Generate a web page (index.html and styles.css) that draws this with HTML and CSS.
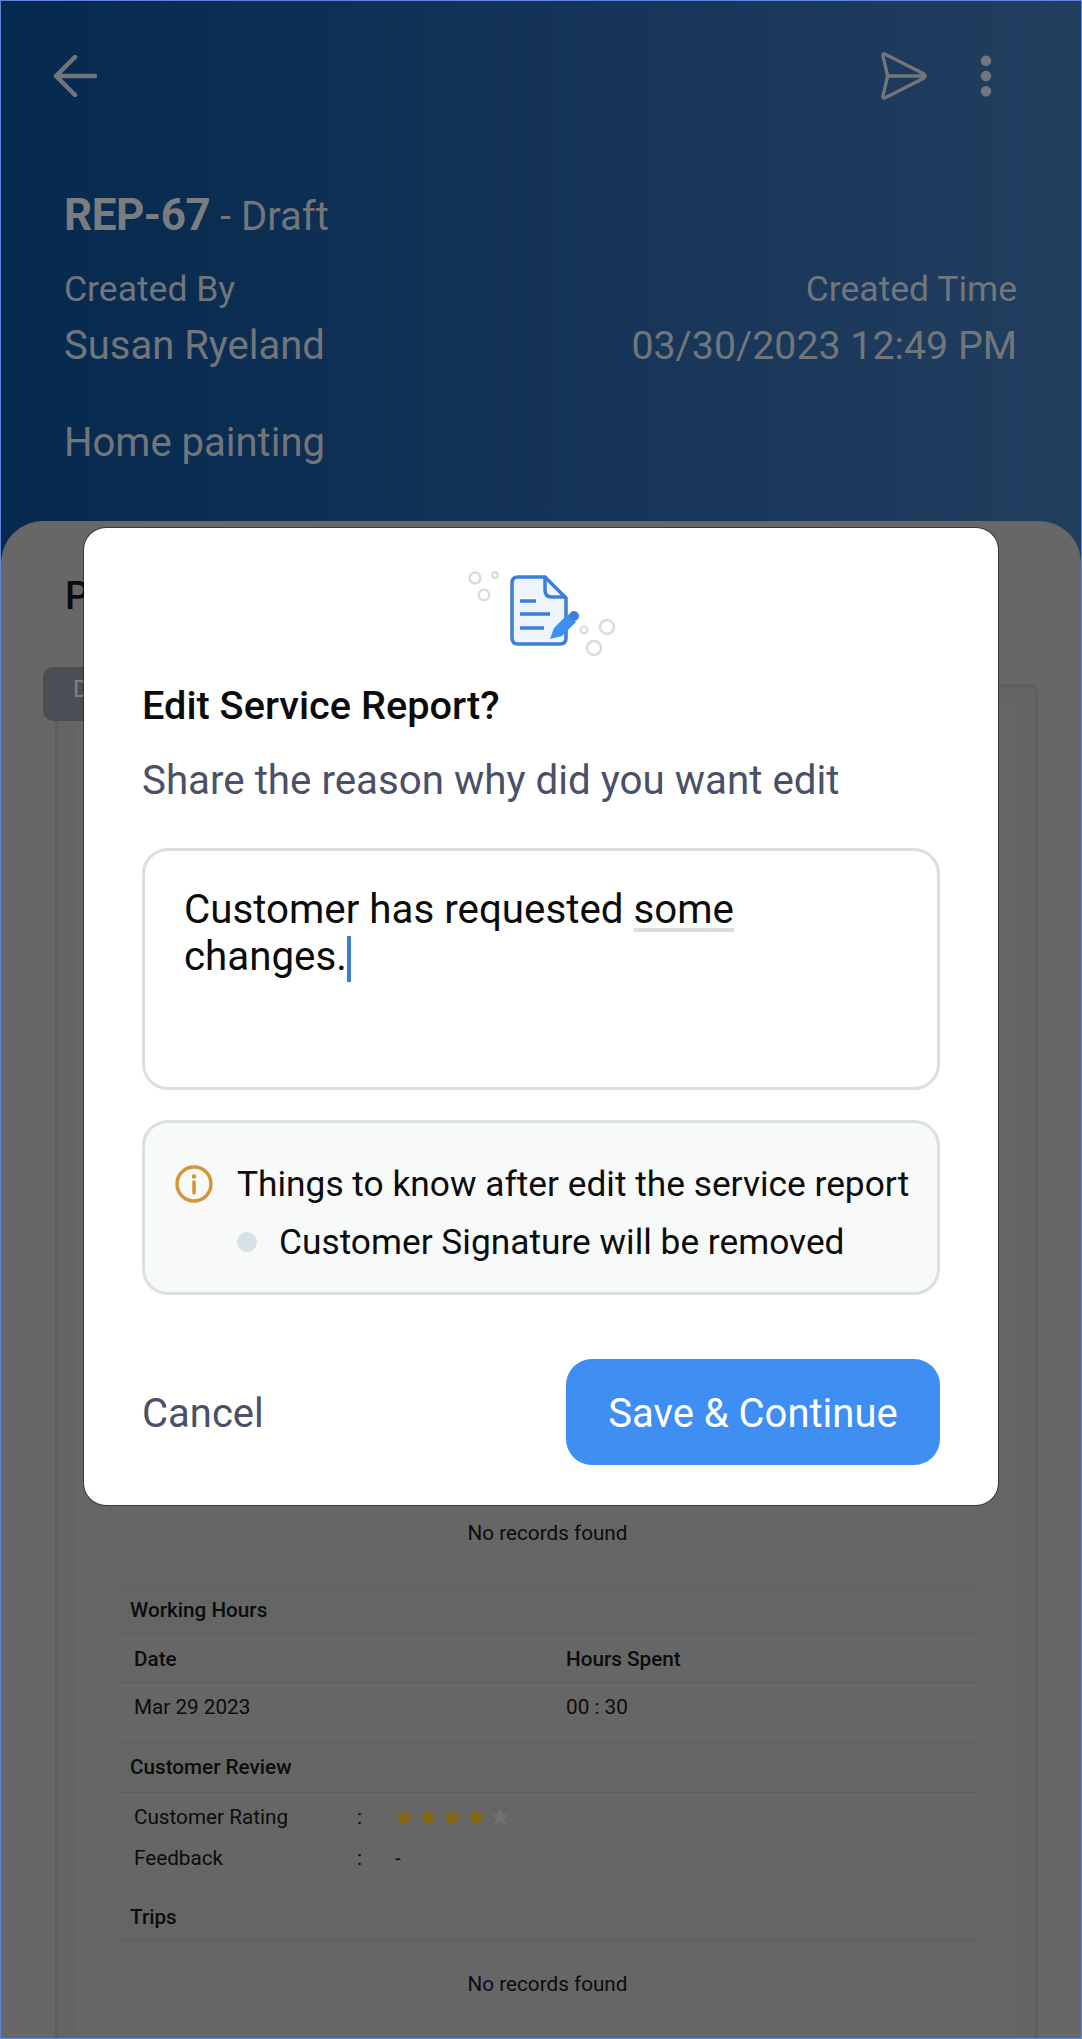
FILE: index.html
```html
<!DOCTYPE html>
<html lang="en">
<head>
    <meta charset="UTF-8">
    <meta name="viewport" content="width=device-width, initial-scale=1.0">
    <title>Edit Service Report</title>
    <link rel="stylesheet" href="styles.css">
</head>
<body>

    <div class="screen">
        <!-- Report header -->
        <div class="report-header">
            <div class="top-bar">
                <svg class="back-icon" width="44" height="42" viewBox="0 0 44 42"><path d="M22 2 L3 21 L22 40 M3 21 H42" fill="none" stroke="#72767b" stroke-width="4.500" stroke-linecap="round" stroke-linejoin="round"/></svg>
                <div class="top-actions">
                    <svg width="48" height="50" viewBox="0 0 50 50"><path d="M3 4 Q3 1 6 2.500 L46 23 Q48 25 46 27 L6 47.500 Q3 49 3 46 L8 25 Z M8 25 H47" fill="none" stroke="#72767b" stroke-width="3.500" stroke-linejoin="round"/></svg>
                    <svg width="14" height="42" viewBox="0 0 14 44"><circle cx="7" cy="6" r="5.500" fill="#72767b"/><circle cx="7" cy="22" r="5.500" fill="#72767b"/><circle cx="7" cy="38" r="5.500" fill="#72767b"/></svg>
                </div>
            </div>
            <div class="report-title"><b>REP-67</b> - Draft</div>
            <div class="meta-row">
                <div>
                    <div class="meta-label">Created By</div>
                    <div class="meta-value">Susan Ryeland</div>
                </div>
                <div class="meta-right">
                    <div class="meta-label">Created Time</div>
                    <div class="meta-value meta-date">03/30/2023 12:49 PM</div>
                </div>
            </div>
            <div class="meta-value job-name">Home painting</div>
        </div>

        <!-- Sheet behind the dialog -->
        <div class="sheet">
            <h2 class="sheet-title">Preview</h2>
            <div class="doc-card">
                <div class="doc-tab">Draft</div>
                <div class="doc-page">
                    <div class="no-records first-records">No records found</div>

                    <div class="section-bar">Working Hours</div>
                    <div class="hours-row hours-head"><span>Date</span><span>Hours Spent</span></div>
                    <div class="hours-row"><span>Mar 29 2023</span><span>00 : 30</span></div>

                    <div class="section-bar review-bar">Customer Review</div>
                    <div class="review-row rating-row">
                        <span>Customer Rating</span><span>:</span>
                        <span class="stars">
                            <svg class="star" viewBox="0 0 20 20"><path d="M10 0 L12.600 6.900 L20 7.300 L14.200 11.900 L16.200 19 L10 15 L3.800 19 L5.800 11.900 L0 7.300 L7.400 6.900 Z"/></svg>
                            <svg class="star" viewBox="0 0 20 20"><path d="M10 0 L12.600 6.900 L20 7.300 L14.200 11.900 L16.200 19 L10 15 L3.800 19 L5.800 11.900 L0 7.300 L7.400 6.900 Z"/></svg>
                            <svg class="star" viewBox="0 0 20 20"><path d="M10 0 L12.600 6.900 L20 7.300 L14.200 11.900 L16.200 19 L10 15 L3.800 19 L5.800 11.900 L0 7.300 L7.400 6.900 Z"/></svg>
                            <svg class="star" viewBox="0 0 20 20"><path d="M10 0 L12.600 6.900 L20 7.300 L14.200 11.900 L16.200 19 L10 15 L3.800 19 L5.800 11.900 L0 7.300 L7.400 6.900 Z"/></svg>
                            <svg class="star star-off" viewBox="0 0 20 20"><path d="M10 0 L12.600 6.900 L20 7.300 L14.200 11.900 L16.200 19 L10 15 L3.800 19 L5.800 11.900 L0 7.300 L7.400 6.900 Z"/></svg>
                        </span>
                    </div>
                    <div class="review-row"><span>Feedback</span><span>:</span><span>-</span></div>

                    <div class="section-bar trips-bar">Trips</div>
                    <div class="no-records trips-records">No records found</div>
                </div>
            </div>
        </div>

        <!-- Edit dialog -->
        <div class="modal-layer">
            <div class="modal">
                <svg class="modal-icon" width="200" height="130" viewBox="0 0 200 130">
                    <g fill="none" stroke="#d9dcdf">
                        <circle cx="34" cy="38" r="5.500" stroke-width="2.500"/>
                        <circle cx="54" cy="35" r="2.800" stroke-width="2.200"/>
                        <circle cx="43" cy="55" r="5.200" stroke-width="2.500"/>
                        <circle cx="143" cy="90" r="3.500" stroke-width="2.200"/>
                        <circle cx="166" cy="87" r="7" stroke-width="2.500"/>
                        <circle cx="153" cy="108" r="7" stroke-width="2.500"/>
                    </g>
                    <path d="M77 37 H104 L125 58 V98 Q125 104 119 104 H77 Q71 104 71 98 V43 Q71 37 77 37 Z" fill="#eef4fb" stroke="#3d7fd6" stroke-width="3.500"/>
                    <path d="M104 37 V50 Q104 57 111 57 H125" fill="none" stroke="#3d7fd6" stroke-width="3.500"/>
                    <path d="M79 61 H95 M79 74 H109 M79 88 H103" fill="none" stroke="#3d7fd6" stroke-width="3.500"/>
                    <path d="M109 99 L113 88 L127 74 L135 82 L121 96 Z" fill="#3f8ef2"/>
                    <circle cx="133" cy="76" r="5" fill="#3d7fd6"/>
                </svg>

                <h3 class="modal-title">Edit Service Report?</h3>
                <p class="modal-subtitle">Share the reason why did you want edit</p>

                <div class="reason-box">Customer has requested <span class="spell-mark">some</span> changes.<span class="caret"></span></div>

                <div class="info-box">
                    <div class="info-row">
                        <svg width="38" height="38" viewBox="0 0 38 38"><circle cx="19" cy="19" r="17" fill="none" stroke="#d4953a" stroke-width="3.500"/><circle cx="19" cy="11.500" r="2.200" fill="#d4953a"/><path d="M19 17 V28" stroke="#d4953a" stroke-width="3.500" stroke-linecap="round"/></svg>
                        <span>Things to know after edit the service report</span>
                    </div>
                    <div class="info-item"><span class="bullet"></span><span>Customer Signature will be removed</span></div>
                </div>

                <div class="modal-actions">
                    <button class="cancel-btn">Cancel</button>
                    <button class="save-btn">Save &amp; Continue</button>
                </div>
            </div>
        </div>
    </div>

</body>
</html>
```

FILE: styles.css
```css
* {
    box-sizing: border-box;
}

body {
    font-family: Roboto, "Liberation Sans", sans-serif;
    margin: 0;
    padding: 0;
    background-color: #5f86dc;
}

.screen {
    position: relative;
    width: 1082px;
    height: 2039px;
    border: 1px solid #5f86dc;
    overflow: hidden;
    background: linear-gradient(90deg, #06294f, #223e5f);
    color: #0c0c0c;
}

/* header */
.report-header {
    height: 520px;
    padding: 51px 64px 0 63px;
    color: #72767b;
}

.top-bar {
    display: flex;
    justify-content: space-between;
    align-items: center;
    height: 48px;
    margin-left: -11px;
    margin-right: 24px;
}

.top-actions {
    display: flex;
    align-items: center;
    gap: 51px;
}

.report-title {
    margin-top: 90px;
    font-size: 40px;
    line-height: 50px;
}

.report-title b {
    font-size: 44px;
    font-weight: 700;
    letter-spacing: -0.5px;
    color: #7a7d80;
}

.meta-row {
    display: flex;
    justify-content: space-between;
    margin-top: 25px;
}

.meta-right {
    text-align: right;
}

.meta-label {
    font-size: 35.500px;
    line-height: 44px;
}

.meta-value {
    font-size: 40px;
    line-height: 48px;
    margin-top: 11px;
}

.meta-date {
    font-size: 39.300px;
}

.job-name {
    margin-top: 49px;
}

/* sheet under the dialog */
.sheet {
    height: 1520px;
    padding: 52px 43px 0 54px;
    background: #676767;
    border-radius: 42px 42px 0 0;
}

.sheet-title {
    margin: 0 0 0 10px;
    font-size: 38px;
    line-height: 46px;
    font-weight: 500;
}

.doc-card {
    position: relative;
    height: 1400px;
    margin-top: 65px;
    padding: 19px 17px 0 17px;
    border: 3px solid #5c5e60;
    border-radius: 8px;
    background: #636565;
}

.doc-tab {
    position: absolute;
    top: -20px;
    left: -15px;
    width: 130px;
    height: 54px;
    padding: 8px 0 0 30px;
    border-radius: 10px;
    background: #4b4f55;
    color: #7d8083;
    font-size: 24px;
}

.doc-page {
    height: 100%;
    padding: 0 41px 0 43px;
    background: #666;
}

.no-records {
    font-size: 20.700px;
    line-height: 30px;
    text-align: center;
}

.first-records {
    padding-top: 812px;
    margin-bottom: 36px;
}

.section-bar {
    height: 50px;
    padding-left: 12px;
    border-top: 1px solid #5f6060;
    border-bottom: 1px solid #5c5d5d;
    background: #646565;
    font-size: 20.700px;
    font-weight: 500;
    line-height: 50px;
}

.hours-row {
    display: grid;
    grid-template-columns: 432px 1fr;
    height: 48px;
    padding-left: 16px;
    font-size: 20.700px;
    line-height: 48px;
}

.hours-head {
    height: 49px;
    line-height: 50px;
    border-bottom: 1px solid #5c5d5d;
    font-weight: 500;
}

.review-bar {
    height: 52px;
    margin-top: 10px;
}

.review-row {
    display: grid;
    grid-template-columns: 223px 38px 1fr;
    height: 40px;
    padding-left: 16px;
    font-size: 20.700px;
    line-height: 40px;
}

.rating-row {
    height: 41px;
    margin-top: 4px;
}

.stars {
    display: flex;
    align-items: center;
    gap: 5.500px;
}

.star {
    width: 18.500px;
    height: 18.500px;
    fill: #86690f;
}

.star-off {
    fill: #707070;
}

.trips-bar {
    margin-top: 13px;
}

.trips-records {
    margin-top: 28px;
}

/* dialog */
.modal-layer {
    position: absolute;
    top: 0;
    left: 0;
    right: 0;
    bottom: 0;
    padding-top: 527px;
}

.modal {
    width: 914px;
    height: 977px;
    margin: 0 auto;
    padding: 12px 58px 0 58px;
    border-radius: 22px;
    background: #fff;
    box-shadow: 0 0 0 1px rgba(0, 0, 0, 0.45);
}

.modal-icon {
    display: block;
    margin: 0 auto;
}

.modal-title {
    margin: 16px 0 0;
    font-size: 39.700px;
    font-weight: 500;
    line-height: 40px;
    color: #0c0c0c;
}

.modal-subtitle {
    margin: 35px 0 0;
    font-size: 40.300px;
    line-height: 40px;
    color: #4a5068;
}

.reason-box {
    height: 242px;
    margin-top: 47px;
    padding: 35px 60px 0 39px;
    border: 3px solid #d9dfe3;
    border-radius: 26px;
    font-size: 40.300px;
    line-height: 47px;
    color: #0c0c0c;
}

.spell-mark {
    text-decoration: underline 4px #dcdcdc;
    text-decoration-skip-ink: none;
    text-underline-offset: 5px;
}

.caret {
    display: inline-block;
    width: 4px;
    height: 46px;
    vertical-align: -12px;
    background: #3d7fd6;
}

.info-box {
    height: 175px;
    margin-top: 30px;
    padding: 41px 0 0 30px;
    border: 3px solid #d9dfe3;
    border-radius: 26px;
    background: #f8fafa;
    font-size: 35.300px;
    line-height: 40px;
    color: #0c0c0c;
}

.info-row {
    display: flex;
    align-items: center;
    gap: 24px;
}

.info-item {
    display: flex;
    align-items: center;
    gap: 22px;
    margin-top: 18px;
    padding-left: 62px;
}

.bullet {
    width: 20px;
    height: 20px;
    border-radius: 50%;
    background: #d9e1e8;
}

.modal-actions {
    display: flex;
    justify-content: space-between;
    align-items: center;
    margin-top: 64px;
}

.cancel-btn {
    padding: 3px 0 0;
    border: none;
    background: none;
    font-family: inherit;
    font-size: 40px;
    color: #4a5068;
}

.save-btn {
    width: 374px;
    height: 106px;
    padding: 3px 0 0;
    border: none;
    border-radius: 26px;
    background: #3f8ef2;
    font-family: inherit;
    font-size: 40px;
    color: #fff;
}
```
